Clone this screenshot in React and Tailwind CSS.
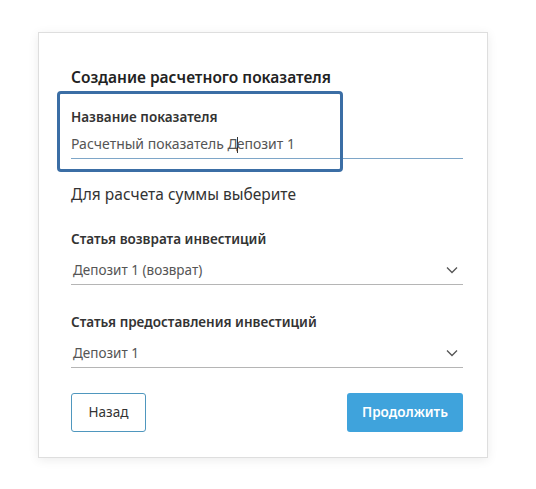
export default function App() {
  const font = { fontFamily: '"Noto Sans", "Open Sans", sans-serif' };
  const Chevron = () => (
    <svg width="12" height="8" viewBox="0 0 12 8" className="mr-[5px]">
      <path d="M1 1.5 L6 6.5 L11 1.5" fill="none" stroke="#555" strokeWidth="1.3" />
    </svg>
  );
  return (
    <div className="w-[536px] h-[489px] bg-white" style={font}>
      <div className="pt-[32px] pl-[38px]">
        <div className="relative w-[450px] h-[426px] bg-white border border-[#dedede] shadow-[0_2px_10px_rgba(0,0,0,0.08)] pl-[32px] pr-[24px] pt-[34px]">
          <div className="text-[15.5px] leading-[20px] font-semibold text-[#222]">Создание расчетного показателя</div>
          <div className="mt-[21px] text-[13.5px] leading-[18px] font-semibold text-[#333]">Название показателя</div>
          <div className="mt-[8px] border-b border-[#7ea6c8] pb-[4px] text-[14px] leading-[20px] text-[#555]">
            Расчетный показатель Д<span className="inline-block w-px h-[16px] bg-[#333] align-middle -mx-px"></span>епозит 1
          </div>
          <div className="mt-[24px] text-[15.5px] leading-[22px] text-[#333]">Для расчета суммы выберите</div>
          <div className="mt-[25px] text-[13.5px] leading-[18px] font-semibold text-[#333]">Статья возврата инвестиций</div>
          <div className="mt-[12px] flex items-center justify-between border-b border-[#b5b5b5] pb-[4px] pl-[2px]">
            <span className="text-[13.5px] leading-[20px] text-[#555]">Депозит 1 (возврат)</span>
            <Chevron />
          </div>
          <div className="mt-[28px] text-[13.5px] leading-[18px] font-semibold text-[#333]">Статья предоставления инвестиций</div>
          <div className="mt-[12px] flex items-center justify-between border-b border-[#b5b5b5] pb-[4px] pl-[2px]">
            <span className="text-[13.5px] leading-[20px] text-[#555]">Депозит 1</span>
            <Chevron />
          </div>
          <div className="mt-[25px] flex justify-between">
            <button className="w-[75px] h-[39px] border border-[#4f97be] rounded-[3px] bg-white text-[13.5px] text-[#333]">Назад</button>
            <button className="w-[116px] h-[39px] rounded-[3px] bg-[#3fa3dc] text-[13.5px] font-semibold text-white">Продолжить</button>
          </div>
          <div className="absolute left-[18px] top-[58px] w-[286px] h-[81px] border-[3px] border-[#3b6ea5] rounded-[4px]"></div>
        </div>
      </div>
    </div>
  );
}
